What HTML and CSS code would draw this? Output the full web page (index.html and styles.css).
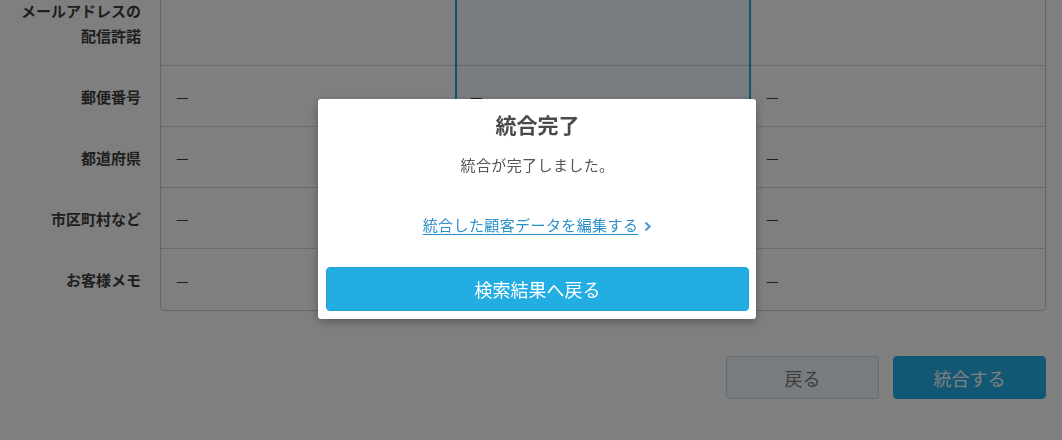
FILE: index.html
```html
<!DOCTYPE html>
<html lang="ja">
<head>
  <meta charset="UTF-8">
  <meta name="viewport" content="width=device-width, initial-scale=1.0">
  <title>顧客データ統合</title>
  <link rel="stylesheet" href="styles.css">
</head>
<body>
  <div class="page">
    <div class="compare">
      <div class="labels">
        <div class="label tall">メールアドレスの<br>配信許諾</div>
        <div class="label">郵便番号</div>
        <div class="label">都道府県</div>
        <div class="label">市区町村など</div>
        <div class="label">お客様メモ</div>
      </div>
      <div class="sheet">
        <div class="col">
          <div class="cell tall"></div>
          <div class="cell">—</div>
          <div class="cell">—</div>
          <div class="cell">—</div>
          <div class="cell">—</div>
        </div>
        <div class="col picked">
          <div class="cell tall"></div>
          <div class="cell">—</div>
          <div class="cell">—</div>
          <div class="cell">—</div>
          <div class="cell">—</div>
        </div>
        <div class="col">
          <div class="cell tall"></div>
          <div class="cell">—</div>
          <div class="cell">—</div>
          <div class="cell">—</div>
          <div class="cell">—</div>
        </div>
      </div>
    </div>
    <div class="actions">
      <button class="btn btn-back">戻る</button>
      <button class="btn btn-merge">統合する</button>
    </div>
  </div>

  <!-- merge finished dialog -->
  <div class="overlay"></div>
  <div class="modal">
    <h2 class="modal-title">統合完了</h2>
    <p class="modal-text">統合が完了しました。</p>
    <p class="modal-link"><a href="#">統合した顧客データを編集する</a><span class="chev">
      <svg width="8" height="11" viewBox="0 0 8 11"><path d="M1.5 1.5 L5.5 5.5 L1.5 9.5" fill="none" stroke="#4b9ad0" stroke-width="2.2"/></svg>
    </span></p>
    <button class="modal-btn">検索結果へ戻る</button>
  </div>
</body>
</html>
```

FILE: styles.css
```css
body {
  margin: 0;
  font-family: "Noto Sans CJK JP", "Noto Sans", sans-serif;
  background: #fff;
  color: #444;
  overflow: hidden;
}
.page {
  width: 1046px;
  margin-top: -21px;
}
.compare {
  display: flex;
}
.labels {
  width: 160px;
  padding-top: 1px;
}
.label {
  height: 61px;
  padding-right: 19px;
  display: flex;
  flex-direction: column;
  justify-content: center;
  text-align: right;
  font-size: 15px;
  font-weight: bold;
  line-height: 25px;
  color: #3e3e3e;
  box-sizing: border-box;
}
.label.tall {
  height: 86px;
}
.sheet {
  flex: 1;
  display: grid;
  grid-template-columns: 294px 296px 294px;
  border: 1px solid #ccc;
  border-radius: 4px;
}
.cell {
  height: 61px;
  box-sizing: border-box;
  border-bottom: 1px dotted #b4b4b4;
  display: flex;
  align-items: center;
  padding-left: 15px;
  font-size: 14px;
  color: #3a3a3a;
}
.cell.tall {
  height: 86px;
}
.cell:last-child {
  border-bottom: none;
}
.picked {
  background: #f3fbfe;
  border-left: 2px solid #22a8dc;
  border-right: 2px solid #22a8dc;
}
.picked .cell {
  padding-left: 13px;
}
.actions {
  display: flex;
  justify-content: flex-end;
  gap: 14px;
  margin-top: 45px;
}
.btn {
  width: 153px;
  height: 43px;
  border-radius: 4px;
  font-family: inherit;
  font-size: 18px;
  cursor: pointer;
}
.btn-back {
  background: #f0f9fe;
  border: 1px solid #c0d6e6;
  color: #777;
}
.btn-merge {
  background: #24b1ea;
  border: 1px solid #24b1ea;
  color: #fff;
}
.overlay {
  position: fixed;
  inset: 0;
  background: rgba(0, 0, 0, 0.5);
}
.modal {
  position: fixed;
  top: 99px;
  left: 318px;
  width: 438px;
  box-sizing: border-box;
  padding: 10px 7px 8px 8px;
  background: #fff;
  border-radius: 3px;
  box-shadow: 0 3px 10px rgba(0, 0, 0, 0.3);
  text-align: center;
}
.modal-title {
  margin: 0;
  font-size: 21px;
  line-height: 30px;
  font-weight: bold;
  color: #4a4a4a;
}
.modal-text {
  margin: 12px 0 0;
  font-size: 15px;
  line-height: 28px;
  letter-spacing: 0.4px;
  color: #555;
}
.modal-link {
  margin: 32px 0 0;
  font-size: 15px;
  line-height: 28px;
  letter-spacing: 0.4px;
}
.modal-link a {
  color: #2a8fc8;
  text-decoration: underline;
  text-underline-offset: 3px;
}
.chev {
  display: inline-block;
  margin-left: 6px;
  vertical-align: -1px;
}
.modal-btn {
  display: block;
  width: 100%;
  height: 44px;
  margin-top: 27px;
  background: #23aee3;
  border: 1px solid #1ea2d5;
  border-radius: 4px;
  color: #fff;
  font-family: inherit;
  font-size: 18px;
  cursor: pointer;
}
```
